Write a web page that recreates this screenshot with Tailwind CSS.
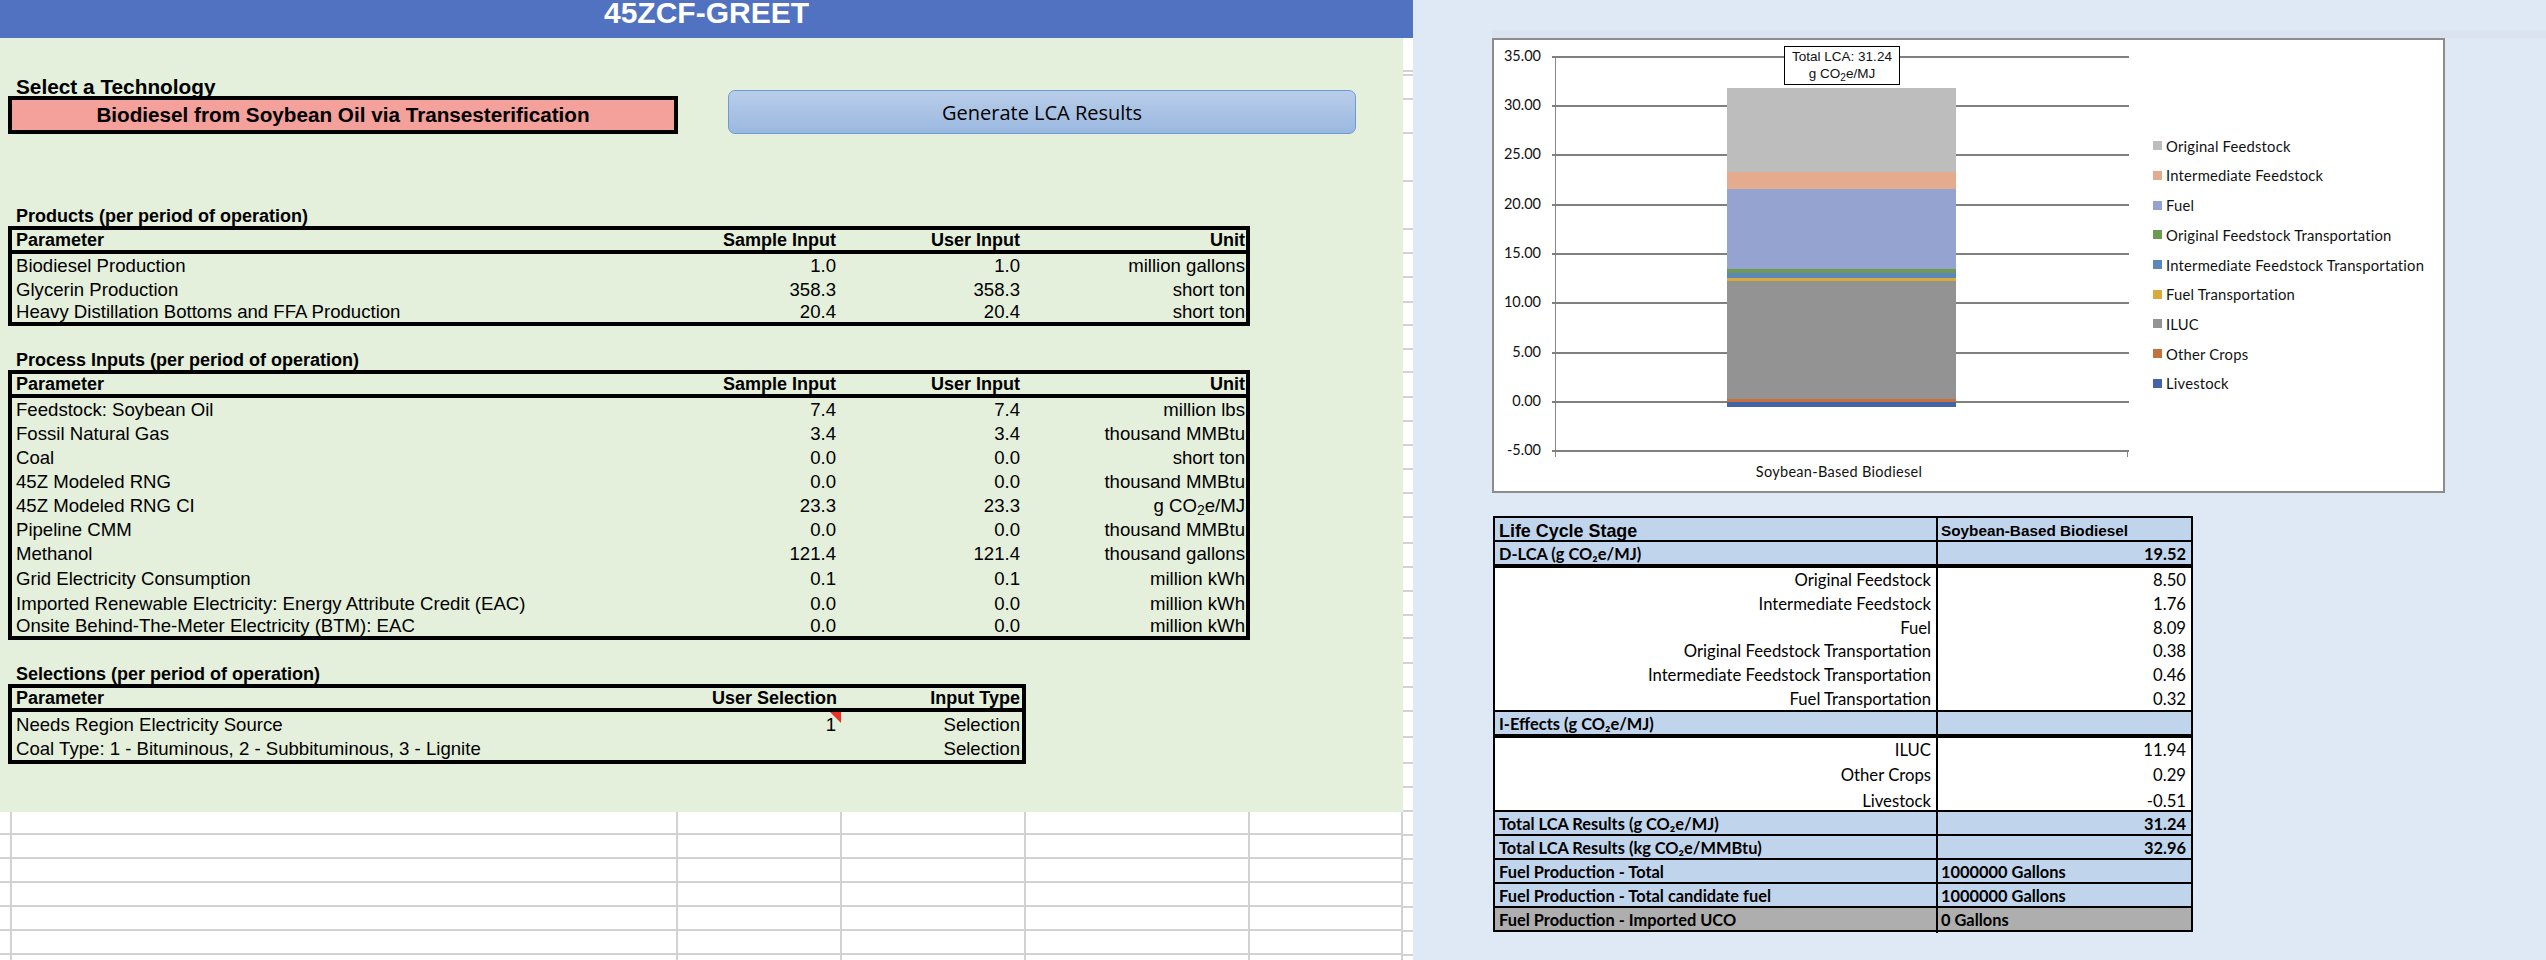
<!DOCTYPE html>
<html lang="en">

<head>
  <meta charset="UTF-8" />
  <title>45ZCF-GREET</title>
  <script src="https://cdn.jsdelivr.net/npm/@tailwindcss/browser@4"></script>
</head>

<body class="bg-[#dfe9f5] w-[2546px] h-[960px] overflow-hidden flex font-['Liberation_Sans',sans-serif] text-black">

  <!-- left sheet -->
  <div class="w-[1413px] shrink-0 bg-white">
    <div class="h-[38px] bg-[#5072c0] text-white text-center font-bold text-[30px] leading-[26px]">45ZCF-GREET</div>
    <div class="flex">
      <div class="w-[1403px] shrink-0">
        <div class="bg-[#e4efdc] h-[774px] pt-[40px] pl-2">
          <div class="flex items-end">
            <div class="w-[670px]">
              <div class="h-[18px] pl-2 text-[20.8px] leading-[18px] font-bold">Select a Technology</div>
              <div class="h-[38px] border-4 border-black bg-[#f4a09b] flex items-center justify-center font-bold text-[20.7px]">Biodiesel from Soybean Oil via Transesterification</div>
            </div>
            <button class="ml-[50px] w-[628px] h-[44px] rounded-[7px] border border-[#6d9bd8] bg-gradient-to-b from-[#b9cde9] to-[#9ab8e0] font-['Open_Sans',sans-serif] text-[20px] leading-6 pt-[1px]">Generate LCA Results</button>
          </div>

          <div class="mt-[72px] h-5 pl-2 text-[18px] leading-5 font-bold">Products (per period of operation)</div>
          <div id="products" class="w-[1242px] border-4 border-black text-[18.6px]"></div>

          <div class="mt-[24px] h-5 pl-2 text-[18px] leading-5 font-bold">Process Inputs (per period of operation)</div>
          <div id="inputs" class="w-[1242px] border-4 border-black text-[18.6px]"></div>

          <div class="mt-[24px] h-5 pl-2 text-[18px] leading-5 font-bold">Selections (per period of operation)</div>
          <div class="w-[1018px] border-4 border-black text-[18.6px] leading-5">
            <div class="h-6 border-b-4 border-black grid grid-cols-[624px_201px_185px] items-center font-bold text-[18px]">
              <div class="pl-1">Parameter</div>
              <div class="text-right">User Selection</div>
              <div class="text-right pr-[2px]">Input Type</div>
            </div>
            <div class="h-[26px] grid grid-cols-[624px_201px_185px] items-center">
              <div class="pl-1">Needs Region Electricity Source</div>
              <div class="text-right pr-[1px] relative">1
                <svg class="absolute right-[-4px] top-[-3px]" width="11" height="11" viewBox="0 0 11 11"><polygon points="0,0 11,0 11,11" fill="#ee3124" /></svg>
              </div>
              <div class="text-right pr-[2px]">Selection</div>
            </div>
            <div class="h-[22px] grid grid-cols-[624px_201px_185px] items-center">
              <div class="pl-1">Coal Type: 1 - Bituminous, 2 - Subbituminous, 3 - Lignite</div>
              <div></div>
              <div class="text-right pr-[2px]">Selection</div>
            </div>
          </div>
        </div>
        <div id="sheet"></div>
      </div>
      <div id="strip" class="w-[10px] shrink-0"></div>
    </div>
  </div>

  <!-- right panel -->
  <div class="flex-1 pt-[30px] pl-[79px]">
    <div class="h-2 bg-[#dbe2f0]"></div>
    <div class="relative w-[953px] h-[455px] bg-white border-2 border-[#8c8c8c] font-['Lato',sans-serif] text-[#111]">
      <div id="plot" class="absolute left-[61px] top-[16px] w-[573px] h-[394px] border-l border-[#868686]">
        <div class="absolute left-[171px] top-[32px] w-[229px] z-10 flex flex-col">
          <div class="h-[84px] bg-[#bdbdbd]"></div>
          <div class="h-[17px] bg-[#e5ab8f]"></div>
          <div class="h-[80px] bg-[#94a3d0]"></div>
          <div class="h-[4px] bg-[#6b9a50]"></div>
          <div class="h-[5px] bg-[#5b87bb]"></div>
          <div class="h-[3px] bg-[#d9a93a]"></div>
          <div class="h-[118px] bg-[#939393]"></div>
          <div class="h-[3px] bg-[#c5713c]"></div>
          <div class="h-[5px] bg-[#4463a8]"></div>
        </div>
        <div class="absolute left-[228px] top-[-10px] w-[116px] h-[39px] z-20 bg-white border border-black text-center font-['Liberation_Sans',sans-serif] text-[13.5px] leading-[17px] pt-[1px]">
          Total LCA: 31.24<br />g CO<sub>2</sub>e/MJ
        </div>
        <div class="absolute right-0 top-[394px] w-px h-[7px] bg-[#868686]"></div>
        <div class="absolute left-[-1px] top-[394px] w-px h-[7px] bg-[#868686]"></div>
      </div>
      <div class="absolute left-[170px] w-[350px] top-[422px] text-center text-[14.5px] leading-5 tracking-[0.3px]">Soybean-Based Biodiesel</div>
      <div id="legend" class="absolute left-[659px] top-[91px] text-[14.8px] tracking-[0.2px]"></div>
    </div>

    <div id="results" class="mt-[23px] ml-px w-[700px] border-t-2 border-x-2 border-black font-['Lato',sans-serif] text-[16.7px]"></div>
  </div>

  <script>
    const cols = 'grid grid-cols-[624px_200px_184px_226px] items-center';

    const products = [
      ['Biodiesel Production', '1.0', '1.0', 'million gallons', 24],
      ['Glycerin Production', '358.3', '358.3', 'short ton', 24],
      ['Heavy Distillation Bottoms and FFA Production', '20.4', '20.4', 'short ton', 20]
    ];
    const inputs = [
      ['Feedstock: Soybean Oil', '7.4', '7.4', 'million lbs', 24],
      ['Fossil Natural Gas', '3.4', '3.4', 'thousand MMBtu', 24],
      ['Coal', '0.0', '0.0', 'short ton', 24],
      ['45Z Modeled RNG', '0.0', '0.0', 'thousand MMBtu', 24],
      ['45Z Modeled RNG CI', '23.3', '23.3', 'g CO<sub>2</sub>e/MJ', 24],
      ['Pipeline CMM', '0.0', '0.0', 'thousand MMBtu', 24],
      ['Methanol', '121.4', '121.4', 'thousand gallons', 24],
      ['Grid Electricity Consumption', '0.1', '0.1', 'million kWh', 26],
      ['Imported Renewable Electricity: Energy Attribute Credit (EAC)', '0.0', '0.0', 'million kWh', 24],
      ['Onsite Behind-The-Meter Electricity (BTM): EAC', '0.0', '0.0', 'million kWh', 20]
    ];

    const renderTable = (rows) => `
      <div class="h-6 border-b-4 border-black ${cols} font-bold leading-5 text-[18px]">
        <div class="pl-1">Parameter</div><div class="text-right">Sample Input</div>
        <div class="text-right">User Input</div><div class="text-right pr-[1px]">Unit</div>
      </div>` + rows.map(r => `
      <div class="${cols} leading-5" style="height:${r[4]}px">
        <div class="pl-1">${r[0]}</div><div class="text-right">${r[1]}</div>
        <div class="text-right">${r[2]}</div><div class="text-right pr-[1px]">${r[3]}</div>
      </div>`).join('');

    document.getElementById('products').innerHTML = renderTable(products);
    document.getElementById('inputs').innerHTML = renderTable(inputs);

    // empty cells under the green block
    const sheetRows = [23, 24, 24, 24, 24, 24, 5];
    document.getElementById('sheet').innerHTML = sheetRows.map((h, i) => `
      <div class="grid grid-cols-[12px_666px_164px_184px_224px_153px] ${i < 6 ? 'border-b-2' : ''} border-[#d2d2d2]" style="height:${h}px">
        <div class="border-r-2 border-[#d2d2d2]"></div><div class="border-r-2 border-[#d2d2d2]"></div>
        <div class="border-r-2 border-[#d2d2d2]"></div><div class="border-r-2 border-[#d2d2d2]"></div>
        <div class="border-r-2 border-[#d2d2d2]"></div><div class="border-r-2 border-[#d2d2d2]"></div>
      </div>`).join('');

    // right edge of the sheet, row lines only
    const ticks = [72, 76, 100, 134, 182, 230, 254, 278, 303, 326, 350, 373, 398, 422, 446, 470, 494, 518, 544, 568, 592, 616, 639, 664, 688, 712, 738, 764, 788, 812, 836, 860, 884, 908, 932, 956];
    let last = 38;
    document.getElementById('strip').innerHTML = ticks.map(y => {
      const h = y - last;
      last = y;
      return `<div class="border-b-2 border-[#d2d2d2]" style="height:${h}px"></div>`;
    }).join('');

    // chart axis
    const labels = ['35.00', '30.00', '25.00', '20.00', '15.00', '10.00', '5.00', '0.00', '-5.00'];
    const plotTop = [0, 49, 98, 148, 197, 246, 296, 345, 394];
    document.getElementById('plot').insertAdjacentHTML('beforeend', labels.map((l, i) => `
      <div class="absolute left-[-4px] w-[577px] h-[1.5px] bg-[#808080]" style="top:${plotTop[i]}px"></div>
      <div class="absolute left-[-65px] w-[50px] text-right text-[14.5px] leading-5" style="top:${plotTop[i] - 10}px">${l}</div>`).join(''));

    const legend = [
      ['#bdbdbd', 'Original Feedstock'], ['#e5ab8f', 'Intermediate Feedstock'], ['#94a3d0', 'Fuel'],
      ['#6b9a50', 'Original Feedstock Transportation'], ['#5b87bb', 'Intermediate Feedstock Transportation'],
      ['#d9a93a', 'Fuel Transportation'], ['#939393', 'ILUC'], ['#c5713c', 'Other Crops'], ['#4463a8', 'Livestock']
    ];
    document.getElementById('legend').innerHTML = legend.map(l => `
      <div class="h-[29.7px] flex items-center gap-[4px] whitespace-nowrap">
        <span class="w-[9px] h-[9px]" style="background:${l[0]}"></span><span>${l[1]}</span>
      </div>`).join('');

    // results table: label, value, height, style
    const results = [
      ['Life Cycle Stage', 'Soybean-Based Biodiesel', 24, 'title'],
      ['D-LCA (g CO₂e/MJ)', '19.52', 26, 'headThick'],
      ['Original Feedstock', '8.50', 24, 'body'],
      ['Intermediate Feedstock', '1.76', 24, 'body'],
      ['Fuel', '8.09', 23, 'body'],
      ['Original Feedstock Transportation', '0.38', 24, 'body'],
      ['Intermediate Feedstock Transportation', '0.46', 24, 'body'],
      ['Fuel Transportation', '0.32', 25, 'bodyEnd'],
      ['I-Effects (g CO₂e/MJ)', '', 26, 'headThick'],
      ['ILUC', '11.94', 25, 'body'],
      ['Other Crops', '0.29', 26, 'body'],
      ['Livestock', '-0.51', 23, 'bodyEnd'],
      ['Total LCA Results (g CO₂e/MJ)', '31.24', 24, 'head'],
      ['Total LCA Results (kg CO₂e/MMBtu)', '32.96', 24, 'head'],
      ['Fuel Production - Total', '1000000 Gallons', 24, 'info'],
      ['Fuel Production - Total candidate fuel', '1000000 Gallons', 24, 'info'],
      ['Fuel Production - Imported UCO', '0 Gallons', 24, 'gray']
    ];
    const rowClass = {
      title: 'bg-[#c0d5ec] font-bold border-b-2',
      headThick: 'bg-[#c0d5ec] font-bold border-b-4 text-[16.4px]',
      head: 'bg-[#c0d5ec] font-bold border-b-2 text-[16.4px]',
      info: 'bg-[#c0d5ec] font-bold border-b-2 text-[16.4px]',
      gray: 'bg-[#aeaeae] font-bold border-b-2 text-[16.4px]',
      body: 'bg-white',
      bodyEnd: 'bg-white border-b-2'
    };
    document.getElementById('results').innerHTML = results.map(r => {
      const [label, value, h, kind] = r;
      const isBody = kind === 'body' || kind === 'bodyEnd';
      let left = `<div class="border-r-2 border-black h-full flex items-center ${isBody ? 'justify-end pr-[5px]' : 'pl-[4px]'}">${label}</div>`;
      let right = `<div class="h-full flex items-center ${kind === 'info' || kind === 'gray' ? 'pl-[3px]' : 'justify-end pr-[5px]'}">${value}</div>`;
      if (kind === 'title') {
        left = `<div class="border-r-2 border-black h-full flex items-center pl-[4px] pb-[1px] font-['Liberation_Sans',sans-serif] text-[17.9px]">${label}</div>`;
        right = `<div class="h-full flex items-center pl-[3px] font-['Liberation_Sans',sans-serif] text-[15.3px]">${value}</div>`;
      }
      return `<div class="grid grid-cols-[443px_253px] border-black ${rowClass[kind]}" style="height:${h}px">${left}${right}</div>`;
    }).join('');
  </script>
</body>

</html>
